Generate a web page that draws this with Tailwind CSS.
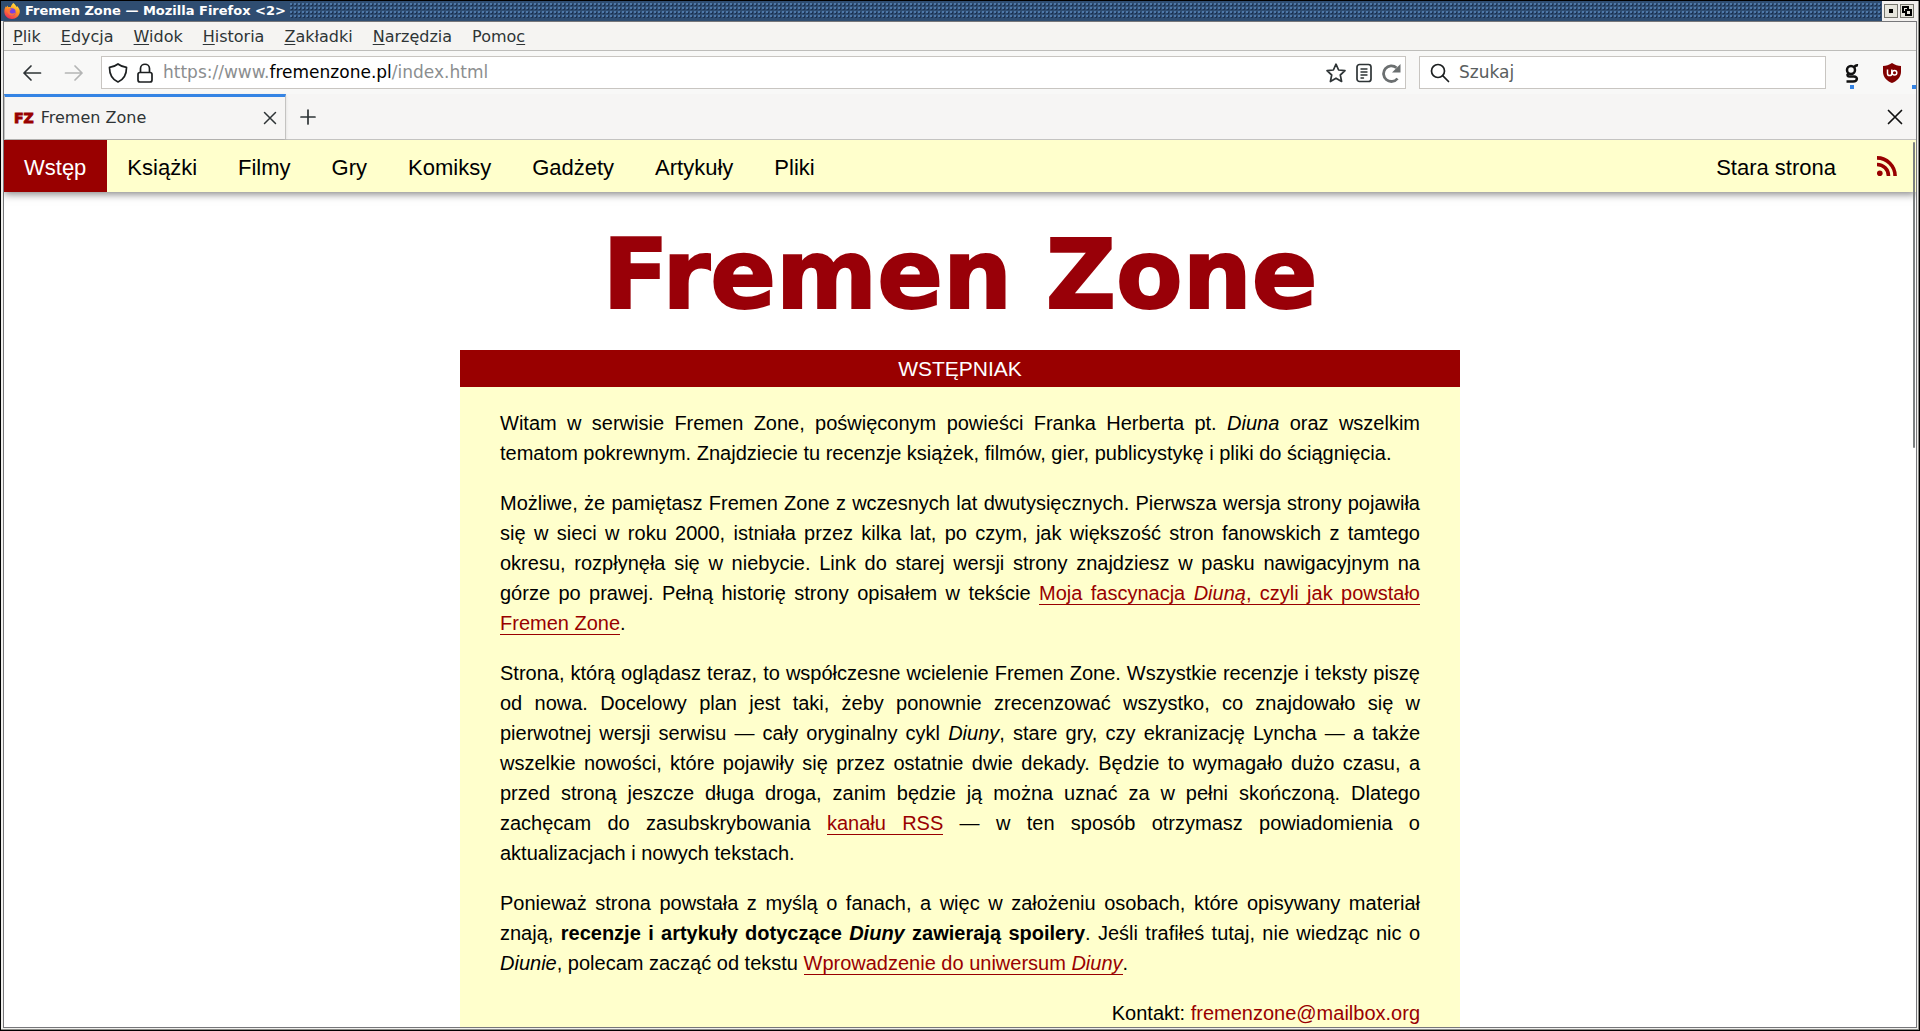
<!DOCTYPE html>
<html lang="pl">
<head>
<meta charset="utf-8">
<title>Fremen Zone — Mozilla Firefox</title>
<script src="https://cdn.jsdelivr.net/npm/@tailwindcss/browser@4"></script>
</head>
<body class="h-screen overflow-hidden bg-black p-px font-['DejaVu_Sans',sans-serif] text-[#2e3436]">
<div class="flex h-full flex-col border-r border-b border-[#8a8a86] bg-[#f0efec]">

  <header class="flex h-5 shrink-0 items-stretch bg-[#2f4d71] text-white">
    <div class="flex items-center gap-[5px] pr-1 pl-[3px]">
      <svg class="size-4" viewBox="0 0 16 16">
        <defs>
          <linearGradient id="flame" x1="0.8" y1="0" x2="0.3" y2="1"><stop offset="0" stop-color="#fff04a"/><stop offset="0.45" stop-color="#ff9a1f"/><stop offset="1" stop-color="#f0285a"/></linearGradient>
        </defs>
        <path d="M9.5 0C11 1.3 12 2.600 12.200 3.600C13 3.800 13.200 3.500 13.100 3C15 4.800 16 7 15.800 9C15.400 13 12 16 8 16C3.600 16 .3 12.700 .3 8.500C.3 6.300 1 4.500 1.900 3.200L2.200 4.200L3.700 2.400L4 4.200C5 3.900 6 4 6.700 4.300C7 2.600 8 1 9.500 0Z" fill="url(#flame)"/>
        <circle cx="7.900" cy="8.900" r="3.700" fill="#7542e5"/>
        <path d="M3.500 6.300C5 5.500 6.500 5.800 7.700 6.700L6 7.600C5.200 9 6.300 10.600 7.900 10.600C9.600 10.600 10 9.600 11.200 9.700C10.600 12.300 8.500 13 7 12.600C4.300 12 3 9 3.500 6.300Z" fill="#ff7139"/>
      </svg>
      <h1 class="text-[13px] leading-5 font-bold whitespace-pre">Fremen Zone — Mozilla Firefox &lt;2&gt;</h1>
    </div>
    <div class="my-[2px] flex-1 bg-[radial-gradient(circle_at_1px_1px,#4e78a8_1px,transparent_1px),radial-gradient(circle_at_2px_2px,#1c3354_1px,transparent_1px)] bg-size-[4px_4px]"></div>
    <div class="flex items-center gap-[2px] bg-[#f2f0ee] pr-1 pl-[2px]">
      <button aria-label="Minimalizuj" class="flex size-[14px] items-center justify-center border border-[#77776f] bg-[#e6e5dc]"><span class="size-1 bg-black"></span></button>
      <button aria-label="Przywróć" class="flex size-[14px] items-center justify-center border border-[#77776f] bg-[#e6e5dc]">
        <svg class="size-[10px]" viewBox="0 0 10 10" fill="#e6e5dc" stroke="#000" stroke-width="2"><path d="M1 1H6V6H1Z"/><path d="M4 4H9V9H4Z"/></svg>
      </button>
    </div>
  </header>

  <div class="mr-px mb-px ml-[2px] flex min-h-0 flex-1 flex-col border border-[#77777a] bg-[#f6f5f4]">

    <nav class="flex h-[29px] shrink-0 items-center gap-5 border-b border-[#bdbdba] bg-[#f5f4f2] px-[9px] pt-px text-base" aria-label="Menu">
      <button><u class="underline-offset-2">P</u>lik</button>
      <button><u class="underline-offset-2">E</u>dycja</button>
      <button><u class="underline-offset-2">W</u>idok</button>
      <button><u class="underline-offset-2">H</u>istoria</button>
      <button><u class="underline-offset-2">Z</u>akładki</button>
      <button><u class="underline-offset-2">N</u>arzędzia</button>
      <button>Pomo<u class="underline-offset-2">c</u></button>
    </nav>

    <div class="flex h-[43px] shrink-0 items-center bg-[#f8f8f7] pl-[18px]">
      <button aria-label="Wstecz" class="mr-[22px]"><svg class="block size-5" viewBox="0 0 20 20" fill="none" stroke="#2e3436" stroke-width="1.700" stroke-linecap="round" stroke-linejoin="round"><path d="M18.500 10H2M9 3L2 10L9 17"/></svg></button>
      <button aria-label="Dalej" class="mr-[17px]"><svg class="block size-5" viewBox="0 0 20 20" fill="none" stroke="#b4b5b5" stroke-width="1.700" stroke-linecap="round" stroke-linejoin="round"><path d="M1.500 10H18M11 3L18 10L11 17"/></svg></button>
      <div class="flex h-[33px] flex-1 items-center border border-[#c8c5c1] bg-white pr-1 pl-[6px]">
        <svg class="size-5 shrink-0" viewBox="0 0 20 20" fill="none" stroke="#1c1f20" stroke-width="1.700" stroke-linejoin="round"><path d="M10 1C12.500 3 15.500 4 18.500 4.300C18.600 11 15.500 16.500 10 19C4.500 16.500 1.400 11 1.500 4.300C4.500 4 7.500 3 10 1Z"/></svg>
        <svg class="ml-[7px] size-5 shrink-0" viewBox="0 0 20 20" fill="none" stroke="#1c1f20" stroke-width="1.700"><rect x="3" y="9.500" width="14" height="9.500" rx="2"/><path d="M5.500 9.500V5.500C5.500 -.2 14.500 -.2 14.500 5.500V9.500"/></svg>
        <div class="ml-2 flex-1 text-[17px] text-[#8b8e8f]">https://www.<span class="text-black">fremenzone.pl</span>/index.html</div>
        <button aria-label="Dodaj zakładkę"><svg class="block size-5" viewBox="0 0 20 20" fill="none" stroke="#2e3436" stroke-width="1.700" stroke-linejoin="round"><path d="M10 1.200L12.600 7L19 7.700L14.300 12L15.600 18.500L10 15.200L4.400 18.500L5.700 12L1 7.700L7.400 7Z"/></svg></button>
        <button aria-label="Widok czytania" class="ml-2"><svg class="block size-5" viewBox="0 0 20 20" fill="none" stroke="#2e3436" stroke-width="1.700" stroke-linecap="round"><rect x="3" y="1.500" width="14" height="17" rx="2.500"/><path d="M7 6H13M7 9H13M7 12H13M7 15H9.500" stroke-width="1.400"/></svg></button>
        <button aria-label="Odśwież" class="ml-[7px]"><svg class="block size-5" viewBox="0 0 20 20" fill="none" stroke="#6b6f70" stroke-width="2.800"><path d="M16.500 15.500A7.800 7.800 0 1 1 15.500 4.800"/><path d="M19.500 1V9.500H11Z" fill="#6b6f70" stroke="none"/></svg></button>
      </div>
      <label class="ml-[13px] flex h-[33px] w-[407px] items-center gap-[9px] border border-[#c8c5c1] bg-white px-[10px]">
        <svg class="size-5 shrink-0" viewBox="0 0 20 20" fill="none" stroke="#1c1f20" stroke-width="1.700" stroke-linecap="round"><circle cx="8" cy="8" r="6.500"/><path d="M12.700 12.700L18.500 18.500"/></svg>
        <input aria-label="Szukaj" placeholder="Szukaj" class="min-w-0 flex-1 text-[17px] outline-none placeholder:text-[#5a5e60]">
      </label>
      <div class="relative ml-[16px] flex h-full w-5 items-center justify-center">
        <button aria-label="Rozszerzenie g"><svg class="block h-5 w-4" viewBox="0 0 16 20" fill="none" stroke="#111" stroke-width="2.500"><circle cx="7" cy="7" r="4"/><path d="M10 4.500C11 2.500 12.500 2 14 2.200M4.500 10.500C2.500 12 3.500 13.500 6 13.500H10C14 13.500 14 18.500 9 18.500H2.500"/></svg></button>
        <span class="absolute bottom-[5px] left-2 size-1 bg-[#3584e4]"></span>
      </div>
      <div class="relative ml-[20px] flex h-full w-[34px] items-center">
        <button aria-label="uBlock"><svg class="block size-5" viewBox="0 0 20 20"><path d="M10 0C13 2 16 3 19 3V9C19 14 15 18 10 20C5 18 1 14 1 9V3C4 3 7 2 10 0Z" fill="#800000"/><path d="M5.500 6.500V10.500C5.500 13.300 9.800 13.300 9.800 10.500V6.500" fill="none" stroke="#fff" stroke-width="1.500"/><circle cx="12.500" cy="9.700" r="2.300" fill="none" stroke="#fff" stroke-width="1.500"/></svg></button>
        <span class="absolute right-0 bottom-[5px] size-1 bg-[#3584e4]"></span>
      </div>
    </div>

    <div class="flex h-[46px] shrink-0 items-stretch border-b border-[#c4c3c1]">
      <div class="flex w-[282px] items-center border-t-[3px] border-r border-l border-[#c4c3c1] border-t-[#3584e4] pr-[7px] pl-[9px] shadow-sm">
        <span class="text-[14px] font-bold text-[#990000] [-webkit-text-stroke:1px_#990000]">FZ</span>
        <span class="ml-[7px] flex-1 text-base">Fremen Zone</span>
        <button aria-label="Zamknij kartę"><svg class="block size-4" viewBox="0 0 16 16" stroke="#2e3436" stroke-width="1.500" stroke-linecap="round"><path d="M2.500 2.500L13.500 13.500M13.500 2.500L2.500 13.500"/></svg></button>
      </div>
      <button aria-label="Nowa karta" class="ml-[14px]"><svg class="block size-4" viewBox="0 0 16 16" stroke="#2e3436" stroke-width="1.700" stroke-linecap="round"><path d="M8 1V15M1 8H15"/></svg></button>
      <button aria-label="Zamknij" class="mr-[13px] ml-auto"><svg class="block size-4" viewBox="0 0 16 16" stroke="#111" stroke-width="1.700" stroke-linecap="round"><path d="M1.500 1.500L14.500 14.500M14.500 1.500L1.500 14.500"/></svg></button>
    </div>

    <div class="relative min-h-0 flex-1 overflow-hidden bg-white font-['Liberation_Sans',sans-serif] text-black">
      <nav class="flex h-[52px] items-stretch bg-[#ffffcc] text-[22px] leading-[56px] shadow-[0_2px_8px_rgba(0,0,0,0.500)]" aria-label="Strona">
        <a href="#" class="bg-[#990000] pr-[21px] pl-5 text-white">Wstęp</a>
        <a href="#" class="pr-[21px] pl-5">Książki</a>
        <a href="#" class="pr-[21px] pl-5">Filmy</a>
        <a href="#" class="pr-[21px] pl-5">Gry</a>
        <a href="#" class="pr-[21px] pl-5">Komiksy</a>
        <a href="#" class="pr-[21px] pl-5">Gadżety</a>
        <a href="#" class="pr-[21px] pl-5">Artykuły</a>
        <a href="#" class="pr-[21px] pl-5">Pliki</a>
        <a href="#" class="ml-auto pr-[21px] pl-5">Stara strona</a>
        <a href="#" aria-label="RSS" class="flex items-center pr-[19px] pl-5"><svg class="size-5" viewBox="0 0 20 20" fill="none" stroke="#990000" stroke-width="3.600"><circle cx="2.800" cy="17.200" r="2.800" fill="#990000" stroke="none"/><path d="M0 8.500C6.500 8.500 11.500 13.500 11.500 20M0 1.900C10 1.900 18.100 10 18.100 20"/></svg></a>
      </nav>
      <div class="absolute top-[2px] right-px h-[306px] w-[2px] rounded bg-[#7b7f80]"></div>

      <h2 class="mt-[27px] text-center font-['DejaVu_Sans',sans-serif] text-[97px] leading-[112px] font-bold text-[#990008] [-webkit-text-stroke:2px_#990008]">Fremen Zone</h2>

      <main class="mx-auto mt-[19px] max-w-[1000px] bg-[#ffffcc]">
        <h3 class="bg-[#990000] text-center text-[21px] leading-[37px] text-white">WSTĘPNIAK</h3>
        <div class="flex flex-col gap-5 px-10 py-[21px] text-justify text-[20px] leading-[30px]">
          <p>Witam w serwisie Fremen Zone, poświęconym powieści Franka Herberta pt. <i>Diuna</i> oraz wszelkim tematom pokrewnym. Znajdziecie tu recenzje książek, filmów, gier, publicystykę i pliki do ściągnięcia.</p>
          <p>Możliwe, że pamiętasz Fremen Zone z wczesnych lat dwutysięcznych. Pierwsza wersja strony pojawiła się w sieci w roku 2000, istniała przez kilka lat, po czym, jak większość stron fanowskich z tamtego okresu, rozpłynęła się w niebycie. Link do starej wersji strony znajdziesz w pasku nawigacyjnym na górze po prawej. Pełną historię strony opisałem w tekście <a href="#" class="border-b border-[#990000] text-[#990000]">Moja fascynacja <i>Diuną</i>, czyli jak powstało Fremen Zone</a>.</p>
          <p>Strona, którą oglądasz teraz, to współczesne wcielenie Fremen Zone. Wszystkie recenzje i teksty piszę od nowa. Docelowy plan jest taki, żeby ponownie zrecenzować wszystko, co znajdowało się w pierwotnej wersji serwisu — cały oryginalny cykl <i>Diuny</i>, stare gry, czy ekranizację Lyncha — a także wszelkie nowości, które pojawiły się przez ostatnie dwie dekady. Będzie to wymagało dużo czasu, a przed stroną jeszcze długa droga, zanim będzie ją można uznać za w pełni skończoną. Dlatego zachęcam do zasubskrybowania <a href="#" class="border-b border-[#990000] text-[#990000]">kanału RSS</a> — w ten sposób otrzymasz powiadomienia o aktualizacjach i nowych tekstach.</p>
          <p>Ponieważ strona powstała z myślą o fanach, a więc w założeniu osobach, które opisywany materiał znają, <b>recenzje i artykuły dotyczące <i>Diuny</i> zawierają spoilery</b>. Jeśli trafiłeś tutaj, nie wiedząc nic o <i>Diunie</i>, polecam zacząć od tekstu <a href="#" class="border-b border-[#990000] text-[#990000]">Wprowadzenie do uniwersum <i>Diuny</i></a>.</p>
          <p class="text-right">Kontakt: <a href="#" class="text-[#990000]">fremenzone@mailbox.org</a></p>
        </div>
      </main>
    </div>
  </div>
</div>
</body>
</html>
